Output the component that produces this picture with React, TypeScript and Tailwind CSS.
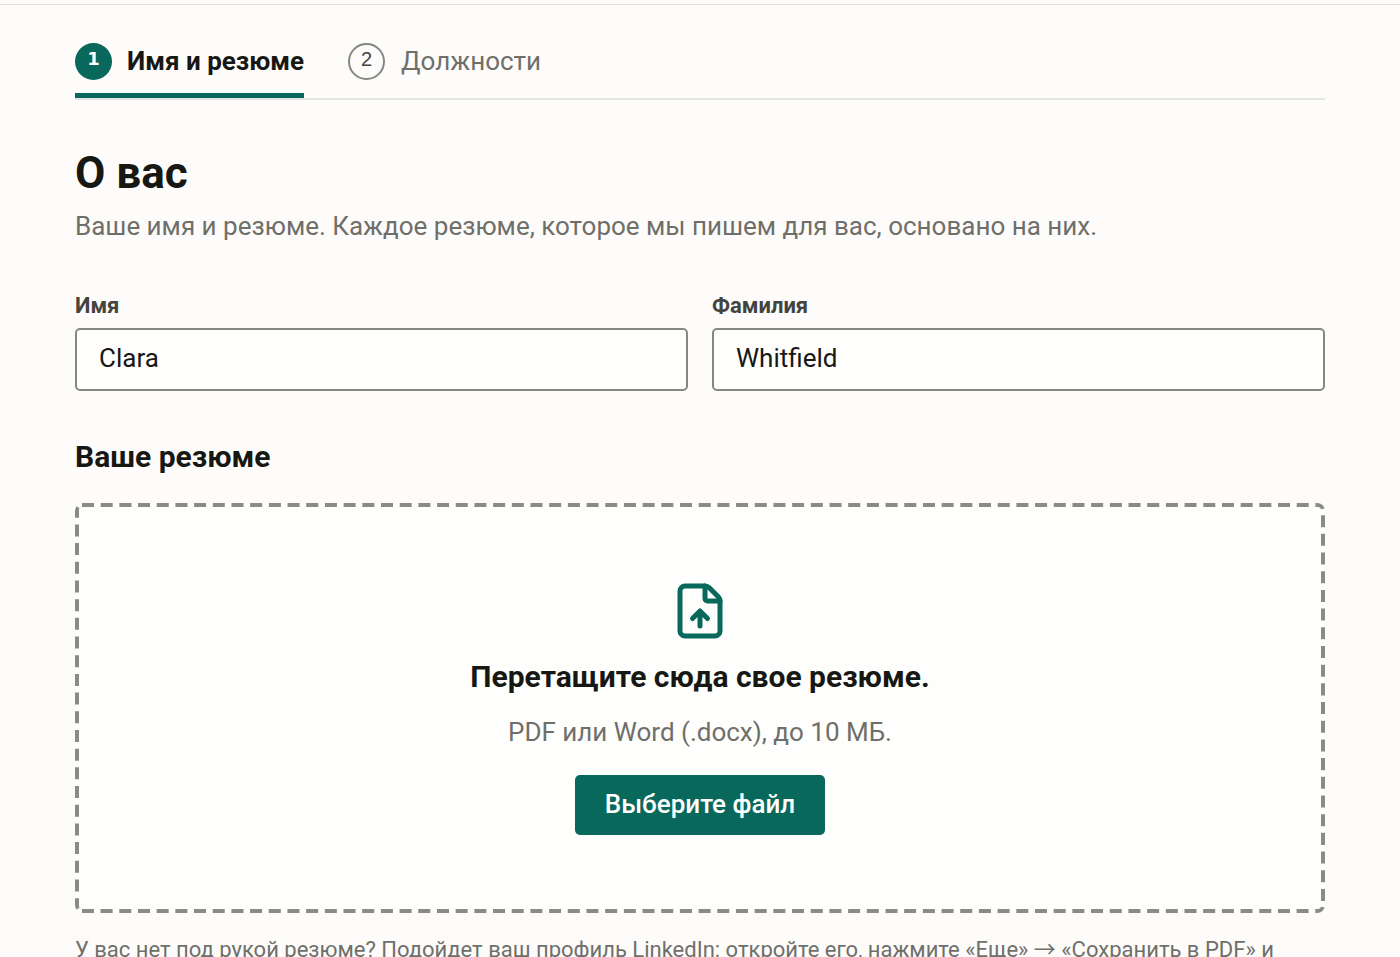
import { useState } from "react";

export default function App() {
  const [firstName, setFirstName] = useState("Clara");
  const [lastName, setLastName] = useState("Whitfield");

  return (
    <div className="min-h-screen bg-[#fdfcfa] font-[Roboto,sans-serif] text-[#171713]">
      <header className="h-[5px] border-b border-[#e2e2e0]" />

      <main className="px-[75px] pb-12">
        {/* Steps */}
        <nav className="flex gap-11 border-b-2 border-[#e5e5e3]">
          <button type="button" className="flex h-[93px] items-center gap-[15px] border-b-[5px] border-[#07685b] pt-6 text-[26px] font-bold cursor-pointer">
            <span className="flex size-[37px] items-center justify-center rounded-full bg-[#07685b] pb-1 font-['DejaVu_Sans',sans-serif] text-lg text-white">1</span>
            Имя и резюме
          </button>
          <button type="button" className="flex h-[93px] items-center gap-4 border-b-[5px] border-transparent pt-6 text-[26px] text-[#6f6f6a] cursor-pointer">
            <span className="flex size-[37px] items-center justify-center rounded-full border-2 border-[#868683] pb-1 font-['Liberation_Sans',sans-serif] text-xl text-[#44443f]">2</span>
            Должности
          </button>
        </nav>

        <h1 className="mt-[46px] text-[44px] leading-[54px] font-bold">О вас</h1>
        <p className="mt-2 text-[26px] leading-9 text-[#6f6f6a]">
          Ваше имя и резюме. Каждое резюме, которое мы пишем для вас, основано на них.
        </p>

        <div className="mt-[47px] grid grid-cols-2 gap-6">
          <label className="flex flex-col gap-[7px] text-[22px] leading-[30px] font-bold text-[#44443f]">
            Имя
            <input value={firstName} onChange={(e) => setFirstName(e.target.value)} className="h-[63px] w-full rounded-[5px] border-2 border-[#868683] bg-[#fefefd] px-[22px] pb-1 text-[26px] font-normal text-[#171713]" />
          </label>
          <label className="flex flex-col gap-[7px] text-[22px] leading-[30px] font-bold text-[#44443f]">
            Фамилия
            <input value={lastName} onChange={(e) => setLastName(e.target.value)} className="h-[63px] w-full rounded-[5px] border-2 border-[#868683] bg-[#fefefd] px-[22px] pb-1 text-[26px] font-normal text-[#171713]" />
          </label>
        </div>

        <h2 className="mt-12 text-[30px] leading-9 font-bold">Ваше резюме</h2>

        {/* Drop area */}
        <section className="relative mt-7 flex flex-col items-center rounded-lg bg-[#fefefd] py-[78px]">
          {/* Dashed outline */}
          <svg className="absolute inset-0 size-full overflow-hidden rounded-lg text-[#8a8a87]" fill="none" aria-hidden="true">
            <rect width="100%" height="100%" rx="7" stroke="currentColor" strokeWidth={8} pathLength={3301} strokeDasharray="12 6.65" />
          </svg>
          <svg className="size-[60px] text-[#07685b]" viewBox="0 0 24 24" fill="none" stroke="currentColor" strokeWidth={2} strokeLinecap="round" strokeLinejoin="round">
            <path d="M6 22a2 2 0 0 1-2-2V4a2 2 0 0 1 2-2h8a2.4 2.4 0 0 1 1.704.706l3.588 3.588A2.4 2.4 0 0 1 20 8v12a2 2 0 0 1-2 2z" />
            <path d="M14 2v5a1 1 0 0 0 1 1h5M12 12v6m3-3-3-3-3 3" />
          </svg>
          <p className="mt-4 text-[30px] leading-10 font-bold">Перетащите сюда свое резюме.</p>
          <p className="mt-4 text-[26px] leading-[38px] text-[#6f6f6a]">PDF или Word (.docx), до 10 МБ.</p>
          <button type="button" className="mt-6 h-[60px] rounded-[5px] bg-[#07685b] px-[30px] pb-0.5 text-[26px] font-medium text-white cursor-pointer">
            Выберите файл
          </button>
        </section>

        <p className="mt-5 text-[22px] leading-[34px] text-[#6f6f6a]">
          У вас нет под рукой резюме? Подойдет ваш профиль LinkedIn: откройте его, нажмите «Еще» <span className="font-['Noto_Sans_CJK_SC',sans-serif] leading-none">→</span> «Сохранить в PDF» и
        </p>
      </main>
    </div>
  );
}
